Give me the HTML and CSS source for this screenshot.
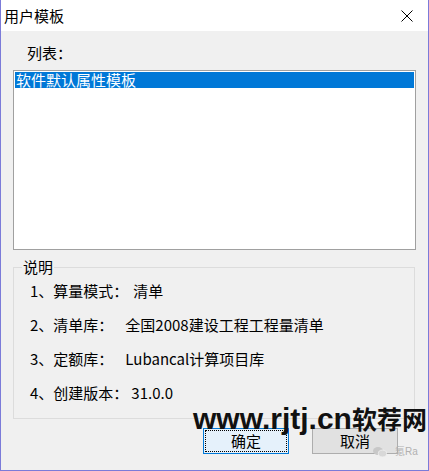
FILE: index.html
```html
<!DOCTYPE html>
<html lang="zh-CN">
<head>
<meta charset="utf-8">
<title>用户模板</title>
<link rel="stylesheet" href="styles.css">
</head>
<body>
<div class="window">
  <div class="titlebar">
    <span class="title">用户模板</span>
    <svg class="close" width="12" height="12" viewBox="0 0 12 12"><path d="M0.5 0.5 L11.5 11.5 M11.5 0.5 L0.5 11.5" stroke="#000" stroke-width="1" fill="none"/></svg>
  </div>
  <div class="client">
    <div class="label">列表：</div>
    <div class="listbox">
      <div class="item selected">软件默认属性模板</div>
    </div>
    <fieldset class="group">
      <legend>说明</legend>
      <div class="line"><span class="k">1、算量模式：</span><span class="v v1">清单</span></div>
      <div class="line"><span class="k">2、清单库：</span><span class="v v2">全国2008建设工程工程量清单</span></div>
      <div class="line"><span class="k">3、定额库：</span><span class="v v3">Lubancal计算项目库</span></div>
      <div class="line"><span class="k">4、创建版本：</span><span class="v v4">31.0.0</span></div>
    </fieldset>
    <div class="buttons">
      <div class="btn primary"><span class="focus">确定</span></div>
      <div class="btn">取消</div>
    </div>
  </div>
  <div class="watermark">www.rjtj.cn<span class="cjk">软荐网</span></div>
  <div class="wechat">
    <svg width="14" height="12" viewBox="0 0 14 12"><ellipse cx="5" cy="5" rx="5" ry="4" fill="#c8c8c8"/><ellipse cx="9.5" cy="7.5" rx="4.2" ry="3.4" fill="#d8d8d8" stroke="#f0f0f0" stroke-width="0.8"/></svg>
    <span>氪Ra</span>
  </div>
</div>
</body>
</html>
```
FILE: styles.css
```css
* { box-sizing: border-box; }
html, body { margin: 0; padding: 0; }
body {
  width: 429px;
  height: 471px;
  overflow: hidden;
  font-family: "Noto Sans CJK SC", "Microsoft YaHei", sans-serif;
  font-size: 15px;
  color: #000;
}
.window {
  position: relative;
  width: 429px;
  height: 471px;
  background: #f0f0f0;
  border-left: 1px solid #7b7bd9;
  border-right: 1px solid #7b7bd9;
  border-bottom: 1px solid #7b7bd9;
  display: flex;
  flex-direction: column;
}
.titlebar {
  height: 31px;
  background: #fff;
  display: flex;
  align-items: center;
  justify-content: space-between;
  padding-left: 3px;
  padding-right: 15px;
}
.title { font-size: 15px; line-height: 18px; }
.close { display: block; margin-top: 1px; }
.client {
  padding: 0 12px 0 12px;
}
.label {
  margin-top: 13px;
  padding-left: 14px;
  line-height: 18px;
  height: 18px;
  margin-bottom: 8px;
}
.listbox {
  height: 180px;
  width: 403px;
  background: #fff;
  border: 1px solid #a0a0a0;
  padding: 1px;
}
.item {
  height: 16px;
  line-height: 16px;
  padding-left: 1px;
  font-size: 15px;
  white-space: nowrap;
}
.item.selected { background: #0078d7; color: #fff; }
.group {
  margin: 10px 0 0 0;
  width: 402px;
  border: 1px solid #dcdcdc;
  padding: 0 8px 8px 8px;
  min-width: 0;
}
.group legend {
  padding: 0 1px;
  font-size: 15px;
  line-height: 14px;
  height: 14px;
}
.line {
  height: 34px;
  line-height: 34px;
  padding-left: 8px;
  white-space: nowrap;
}
.v1 { margin-left: 5px; }
.v2 { margin-left: 12px; }
.v3 { margin-left: 12px; }
.v4 { margin-left: 3px; }
.buttons {
  margin-top: 9px;
  display: flex;
  justify-content: flex-end;
  gap: 23px;
  padding-right: 18px;
}
.btn {
  width: 86px;
  height: 26px;
  border: 1px solid #adadad;
  background: #e1e1e1;
  display: flex;
  align-items: center;
  justify-content: center;
  font-size: 15px;
  line-height: 18px;
}
.btn.primary {
  border: 1px solid #0078d7;
  background: #e5f1fb;
  padding: 1px;
}
.btn .focus {
  width: 100%;
  height: 100%;
  border: 1px dotted #000;
  display: flex;
  align-items: center;
  justify-content: center;
}
.watermark {
  position: absolute;
  left: 192px;
  top: 403px;
  font-family: "Liberation Sans", Arial, sans-serif;
  font-weight: bold;
  font-size: 30px;
  line-height: 30px;
  color: #111;
  white-space: nowrap;
}
.watermark .cjk {
  font-family: "Noto Sans CJK SC", sans-serif;
  font-size: 25px;
  font-weight: bold;
}
.wechat {
  position: absolute;
  left: 372px;
  top: 446px;
  display: flex;
  align-items: center;
  gap: 8px;
  font-family: "Liberation Sans", sans-serif;
  font-size: 10px;
  color: #b0b0b0;
  line-height: 12px;
}
.wechat svg { display: block; }
```
